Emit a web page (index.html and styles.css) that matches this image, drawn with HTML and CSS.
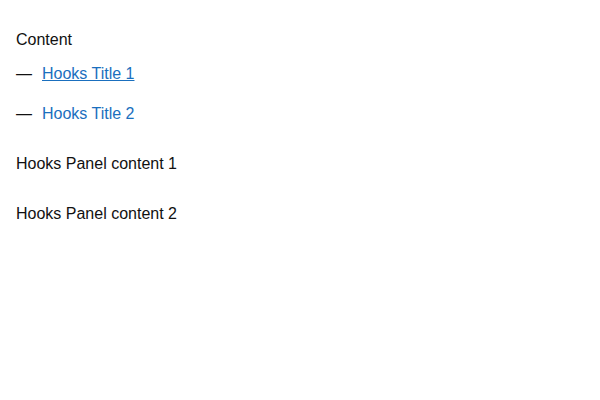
FILE: index.html
```html
<!DOCTYPE html>
<html>
<head>
<meta charset="utf-8">
<link rel="stylesheet" href="styles.css">
</head>
<body>
<div class="page">
  <div class="heading">Content</div>
  <ul class="tabs">
    <li class="tab"><span class="dash">—</span><a class="tab-link active" href="#">Hooks Title 1</a></li>
    <li class="tab"><span class="dash">—</span><a class="tab-link" href="#">Hooks Title 2</a></li>
  </ul>
  <div class="panels">
    <div class="panel">Hooks Panel content 1</div>
    <div class="panel">Hooks Panel content 2</div>
  </div>
</div>
</body>
</html>
```
FILE: styles.css
```css
html, body {
  margin: 0;
  padding: 0;
  background: #fff;
}
body {
  font-family: "Liberation Sans", Arial, sans-serif;
  font-size: 16px;
  color: #111;
}
.page {
  padding: 31px 16px;
}
.heading {
  line-height: 18px;
}
.tabs {
  list-style: none;
  margin: 16px 0 0 0;
  padding: 0;
  display: flex;
  flex-direction: column;
  gap: 22px;
}
.tab {
  display: flex;
  line-height: 18px;
}
.dash {
  width: 26px;
}
.tab-link {
  color: #1a6fbe;
  text-decoration: none;
}
.tab-link.active {
  text-decoration: underline;
}
.panels {
  margin-top: 32px;
  display: flex;
  flex-direction: column;
  gap: 32px;
}
.panel {
  line-height: 18px;
}
```
